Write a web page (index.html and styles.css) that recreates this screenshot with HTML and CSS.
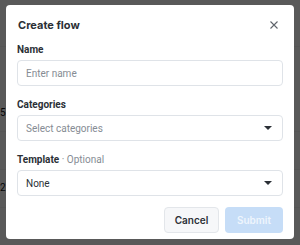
FILE: index.html
```html
<!DOCTYPE html>
<html lang="en">
<head>
    <meta charset="UTF-8">
    <meta name="viewport" content="width=device-width, initial-scale=1.0">
    <title>Create flow</title>
    <link rel="stylesheet" href="styles.css">
</head>
<body>
    <!-- page behind the dialog -->
    <div class="page">
        <div class="page-head"></div>
        <div class="page-row tall"><span>5</span></div>
        <div class="page-row short"></div>
        <div class="page-row"><span>2</span></div>
    </div>

    <div class="overlay">
        <div class="modal">
            <div class="modal-head">
                <h2>Create flow</h2>
                <svg class="close" width="8" height="8" viewBox="0 0 8 8">
                    <path d="M0.5 0.5 L7.5 7.5 M7.5 0.5 L0.5 7.5" stroke="#5f646b" stroke-width="1.1" fill="none"/>
                </svg>
            </div>

            <div class="field">
                <label>Name</label>
                <input class="input" type="text" placeholder="Enter name">
            </div>

            <div class="field">
                <label>Categories</label>
                <div class="select placeholder">
                    <span>Select categories</span>
                    <svg width="8" height="4" viewBox="0 0 8 4"><path d="M0 0 H8 L4 4 Z" fill="#2b3036"/></svg>
                </div>
            </div>

            <div class="field">
                <label>Template <span class="optional">· Optional</span></label>
                <div class="select">
                    <span>None</span>
                    <svg width="8" height="4" viewBox="0 0 8 4"><path d="M0 0 H8 L4 4 Z" fill="#2b3036"/></svg>
                </div>
            </div>

            <div class="actions">
                <button class="btn cancel-btn">Cancel</button>
                <button class="btn submit-btn" disabled>Submit</button>
            </div>
        </div>
    </div>
</body>
</html>
```

FILE: styles.css
```css
* { margin: 0; padding: 0; box-sizing: border-box; }
body { font-family: Roboto, "Liberation Sans", sans-serif; background: #fff; width: 300px; height: 245px; overflow: hidden; }

.page { font-size: 10px; color: #111; }
.page-head { height: 47px; border-bottom: 1px solid #f2f2f2; }
.page-row { height: 38px; border-bottom: 1px solid #f2f2f2; padding-top: 12px; }
.page-row.tall { height: 85px; padding-top: 60px; }
.page-row.short { height: 38px; }

.overlay { position: fixed; inset: 0; background: rgba(0,0,0,0.65); padding: 5px 6px; }
.modal { background: #fff; border-radius: 4px; padding: 10px 11px 6px; }

.modal-head { display: flex; justify-content: space-between; align-items: center; height: 20px; margin-bottom: 7px; }
.modal-head h2 { font-family: Inter, sans-serif; font-size: 11px; font-weight: 700; color: #2b3036; padding-left: 1px; }
.close { margin-right: 5px; }

.field { margin-bottom: 11px; }
.field label { display: block; font-size: 10px; font-weight: 700; color: #2b3036; line-height: 16px; margin-bottom: 2px; }
.optional { font-weight: 400; color: #868c94; }

.input, .select { width: 100%; height: 26px; border: 1px solid #dfe3e8; border-radius: 4px; padding: 0 10px 0 8px; font-family: Roboto, sans-serif; font-size: 10px; color: #2b3036; background: #fff; }
.input { outline: none; }
.input::placeholder { color: #868c94; }
.select { display: flex; justify-content: space-between; align-items: center; }
.select.placeholder span { color: #868c94; }

.actions { display: flex; justify-content: flex-end; gap: 6px; }
.btn { height: 26px; border-radius: 4px; font-family: Inter, sans-serif; font-size: 10px; font-weight: 600; cursor: pointer; }
.cancel-btn { width: 55px; background: #f6f7f9; border: 1px solid #e3e6ea; color: #2b3036; }
.submit-btn { width: 58px; background: #c6ddf7; border: none; color: #eef5fd; }
```
